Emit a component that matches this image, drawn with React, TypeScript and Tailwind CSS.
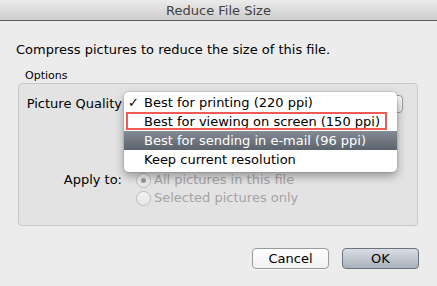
import React from "react";

const font = { fontFamily: '"DejaVu Sans", "Liberation Sans", sans-serif' };

function Radio({ checked, label }: { checked?: boolean; label: string }) {
  return (
    <div className="flex items-center h-[18px]">
      <span className="w-[15px] h-[15px] rounded-full border border-[#bdbdbd] bg-gradient-to-b from-[#f4f4f4] to-[#e6e6e6] flex items-center justify-center">
        {checked && <span className="w-[5px] h-[5px] rounded-full bg-[#9a9a9a]" />}
      </span>
      <span className="ml-[3px] text-[#a3a3a3]">{label}</span>
    </div>
  );
}

export default function App() {
  return (
    <div
      className="w-[437px] h-[286px] bg-[#ececec] text-[13px] text-black overflow-hidden flex flex-col"
      style={font}
    >
      <div className="h-[21px] shrink-0 bg-gradient-to-b from-[#ebebeb] to-[#cdcdcd] border-b border-[#5a5a5a] flex items-center justify-center text-[#3f3f3f] leading-none">
        Reduce File Size
      </div>

      <div className="pl-[16px] mt-[21px] leading-[16px]">Compress pictures to reduce the size of this file.</div>

      <div className="pl-[25px] mt-[12px] text-[11px] leading-[12px]">Options</div>

      <div className="relative ml-[18px] mr-[19px] mt-[1px] h-[143px] border border-[#c8c8c8] rounded-[4px] bg-[#e3e3e3]">
        <div className="grid grid-cols-[104px_1fr] gap-x-[3px] pt-[11px]">
          <div className="text-right leading-[18px] h-[18px] pr-[1px]">Picture Quality</div>
          <div className="h-[18px] mr-[14px] rounded-[4px] border border-[#9c9c9c] bg-gradient-to-b from-white to-[#e8e8e8]" />
          <div className="text-right leading-[18px] h-[18px] mt-[58px] pr-[1px]">Apply to:</div>
          <div className="mt-[58px] ml-[10px] flex flex-col">
            <Radio checked label="All pictures in this file" />
            <Radio label="Selected pictures only" />
          </div>
        </div>

        <div className="absolute left-[105px] top-[8px] w-[273px] h-[80px] bg-white/95 rounded-[5px] shadow-[0_4px_10px_rgba(0,0,0,0.35),0_0_0_1px_rgba(0,0,0,0.08)] pt-[1px] pb-[2px]">
          <div className="h-[19px] flex items-center">
            <span className="w-[20px] pl-[4px]">✓</span>
            <span>Best for printing (220 ppi)</span>
          </div>
          <div className="h-[19px] flex items-center">
            <span className="w-[20px]" />
            <span>Best for viewing on screen (150 ppi)</span>
          </div>
          <div className="h-[19px] flex items-center bg-gradient-to-b from-[#848b94] to-[#5c636c] text-white">
            <span className="w-[20px]" />
            <span>Best for sending in e-mail (96 ppi)</span>
          </div>
          <div className="h-[19px] flex items-center">
            <span className="w-[20px]" />
            <span>Keep current resolution</span>
          </div>
          <div className="absolute left-[2px] top-[20px] w-[261px] h-[18px] border-2 border-[#f05a55]" />
        </div>
      </div>

      <div className="flex justify-end gap-[13px] mr-[18px] mt-[22px]">
        <button className="w-[77px] h-[21px] rounded-[4px] border border-[#9a9a9a] bg-gradient-to-b from-white to-[#f0f0f0] leading-none shadow-[0_1px_0_rgba(255,255,255,0.6)]">
          Cancel
        </button>
        <button className="w-[77px] h-[21px] rounded-[4px] border border-[#6b7380] bg-gradient-to-b from-[#d9dee5] to-[#a9b1bc] leading-none">
          OK
        </button>
      </div>
    </div>
  );
}
